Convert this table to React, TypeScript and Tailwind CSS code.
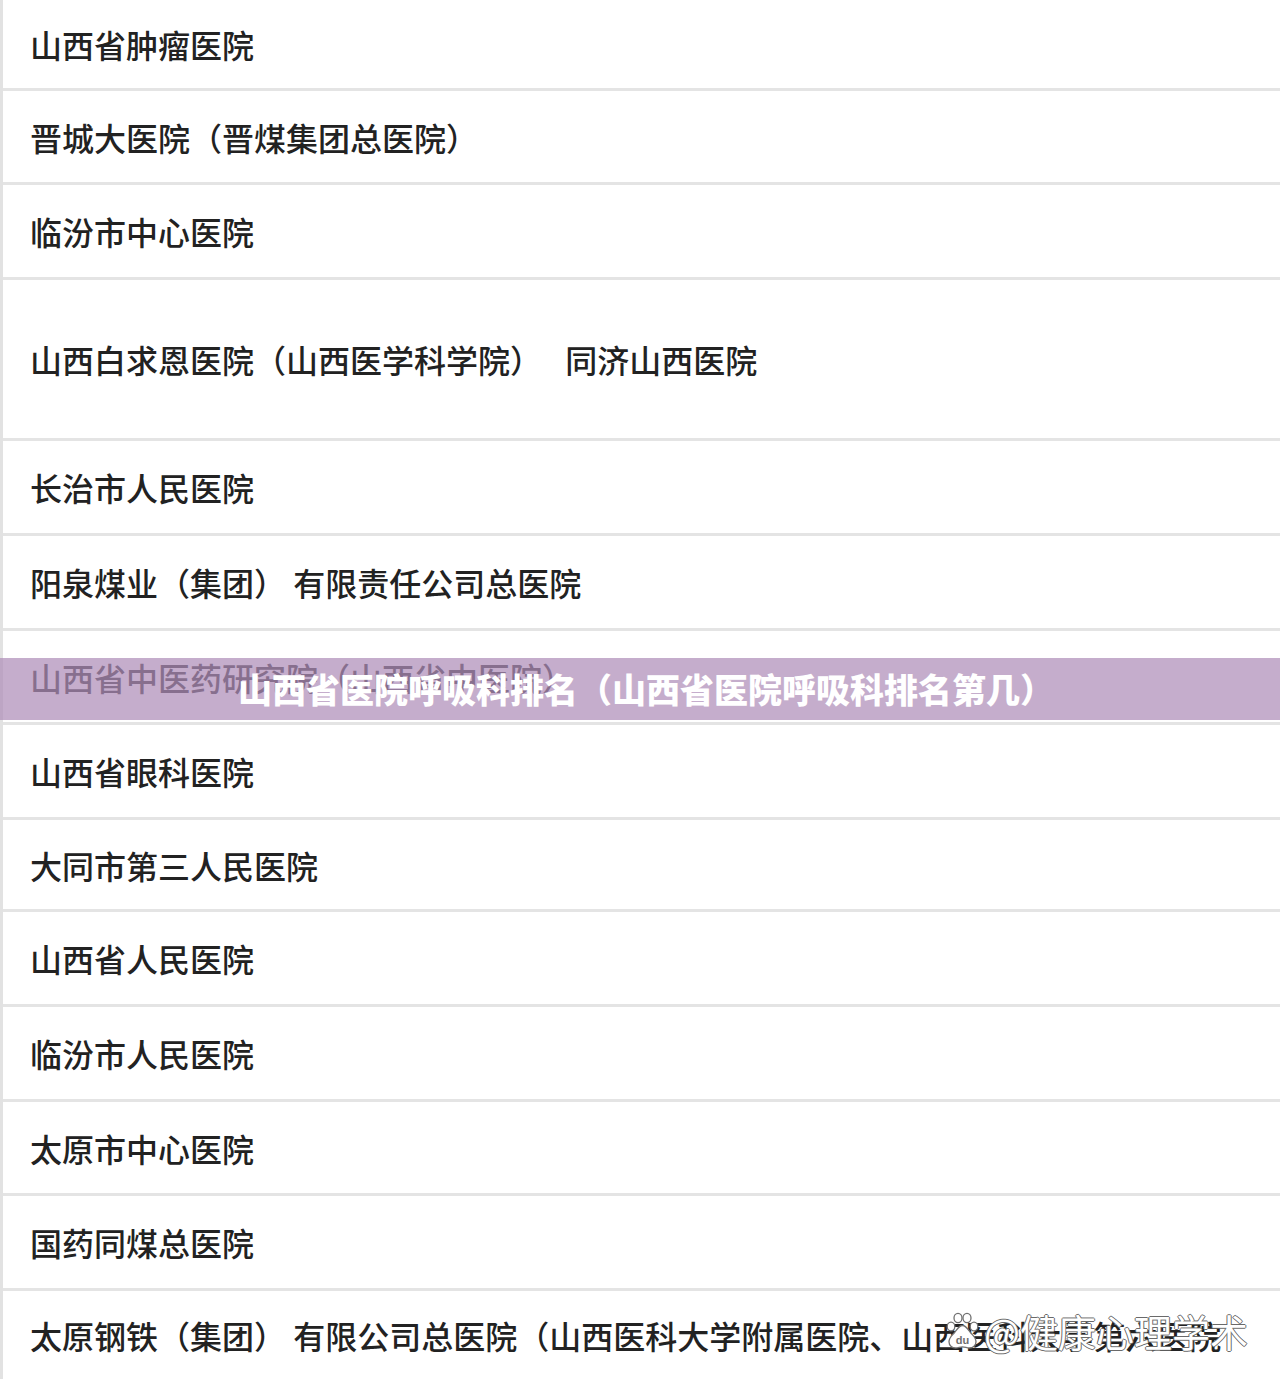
import React from 'react';

type Row = { name: string; h: string };

// heights include the 3px bottom rule (border-box)
const rows: Row[] = [
  { name: '山西省肿瘤医院', h: 'h-[91px]' },
  { name: '晋城大医院（晋煤集团总医院）', h: 'h-[94px]' },
  { name: '临汾市中心医院', h: 'h-[95px]' },
  { name: '山西白求恩医院（山西医学科学院）　 同济山西医院', h: 'h-[161px]' },
  { name: '长治市人民医院', h: 'h-[95px]' },
  { name: '阳泉煤业（集团） 有限责任公司总医院', h: 'h-[95px]' },
  { name: '山西省中医药研究院（山西省中医院）', h: 'h-[94px]' },
  { name: '山西省眼科医院', h: 'h-[95px]' },
  { name: '大同市第三人民医院', h: 'h-[92px]' },
  { name: '山西省人民医院', h: 'h-[95px]' },
  { name: '临汾市人民医院', h: 'h-[95px]' },
  { name: '太原市中心医院', h: 'h-[94px]' },
  { name: '国药同煤总医院', h: 'h-[95px]' },
  { name: '太原钢铁（集团） 有限公司总医院（山西医科大学附属医院、山西医科大学第六医院', h: 'h-[88px]' },
];

const BaiduPaw: React.FC = () => (
  <svg width="33" height="38" viewBox="0 0 33 38" className="shrink-0">
    <g fill="#ffffff" stroke="#707070" strokeWidth="1.3">
      <ellipse cx="5" cy="14.5" rx="3.8" ry="4.4" />
      <ellipse cx="12" cy="6" rx="4" ry="4.6" />
      <ellipse cx="21" cy="6" rx="4" ry="4.6" />
      <ellipse cx="28" cy="14.5" rx="3.8" ry="4.4" />
      <path d="M16.5 13.5c-3.2 0-5 3.2-7.6 6.6C6.3 23.5 3 25.2 3 29.8c0 3.8 3 6.2 6.5 6.2 2.8 0 4.4-1.1 7-1.1s4.2 1.1 7 1.1c3.5 0 6.5-2.4 6.5-6.2 0-4.6-3.3-6.3-5.9-9.7-2.6-3.4-4.4-6.6-7.600-6.6z" />
    </g>
    <text x="16.5" y="32" textAnchor="middle" fontSize="11" fontWeight="700" fill="#707070" fontFamily="'Liberation Sans', sans-serif">du</text>
  </svg>
);

const App: React.FC = () => {
  return (
    <div className="relative w-[1280px] h-[1379px] overflow-hidden bg-white font-['Noto_Sans_CJK_SC','Noto_Sans',sans-serif]">
      <div className="flex flex-col border-l-[3px] border-[#e2e2e2] h-full">
        {rows.map((row, i) => (
          <div
            key={i}
            className={`${row.h} shrink-0 flex items-center pl-[27px] text-[32px] leading-none font-medium text-[#222] whitespace-nowrap ${
              i < rows.length - 1 ? 'border-b-[3px] border-[#e4e4e4]' : 'flex-1'
            }`}
          >
            {row.name}
          </div>
        ))}
      </div>

      <div className="absolute left-0 right-0 top-[658px] h-[62px] bg-[#ae8db8]/[0.72] flex items-center justify-center pl-3">
        <span className="text-white text-[34px] font-black leading-none">
          山西省医院呼吸科排名（山西省医院呼吸科排名第几）
        </span>
      </div>

      <div className="absolute left-[946px] top-[1312px] flex items-center gap-[5px]">
        <BaiduPaw />
        <span className="text-[38px] leading-none font-normal text-white [text-shadow:1px_0_0_#6a6a6a,-1px_0_0_#6a6a6a,0_1px_0_#6a6a6a,0_-1px_0_#6a6a6a]">
          @健康心理学术
        </span>
      </div>
    </div>
  );
};

export default App;
